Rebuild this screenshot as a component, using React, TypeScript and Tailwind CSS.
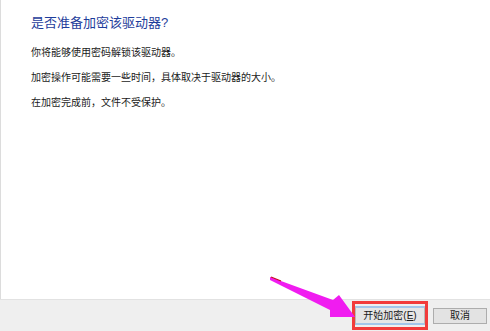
export default function App() {
  return (
    <div className="relative flex h-[331px] w-[490px] flex-col overflow-hidden bg-white font-['Liberation_Sans','Noto_Sans_CJK_SC',sans-serif]">
      <div className="flex h-[299px] flex-col border-l border-[#dcdcdc] pl-[30px] pt-[14px]">
        <h1 className="text-[13px] leading-[18px] text-[#1e3d9b]">是否准备加密该驱动器?</h1>
        <div className="mt-[14px] flex flex-col gap-[12px] text-[10px] leading-[13px] text-[#1a1a1a]">
          <p>你将能够使用密码解锁该驱动器。</p>
          <p>加密操作可能需要一些时间，具体取决于驱动器的大小。</p>
          <p>在加密完成前，文件不受保护。</p>
        </div>
      </div>

      <div className="flex flex-1 items-center justify-end gap-[5px] border-t border-[#e2e2e2] bg-[#efefef] pr-[3px]">
        <div className="border-[3px] border-[#f23b3b] py-[2px]">
          <button className="flex h-[19px] w-[70px] items-center justify-center border-x border-y-2 border-x-[#b9b9b9] border-y-[#a3c6ea] bg-[#e6e6e6] text-[10px] text-[#1a1a1a]">
            开始加密(<span className="underline">E</span>)
          </button>
        </div>
        <button className="flex h-[16px] w-[54px] items-center justify-center border border-[#adadad] bg-[#e3e3e3] text-[10px] text-[#1a1a1a]">
          取消
        </button>
      </div>

      {/* annotation arrow */}
      <svg
        className="pointer-events-none absolute left-0 top-0"
        width="490"
        height="331"
        viewBox="0 0 490 331"
      >
        <polygon
          points="270,277 333,300 339,295 355,317 330,317 330,310 270,280"
          fill="#f01cf0"
        />
        <line x1="271" y1="277" x2="281" y2="281" stroke="#c80a1e" strokeWidth="1.2" />
      </svg>
    </div>
  )
}
